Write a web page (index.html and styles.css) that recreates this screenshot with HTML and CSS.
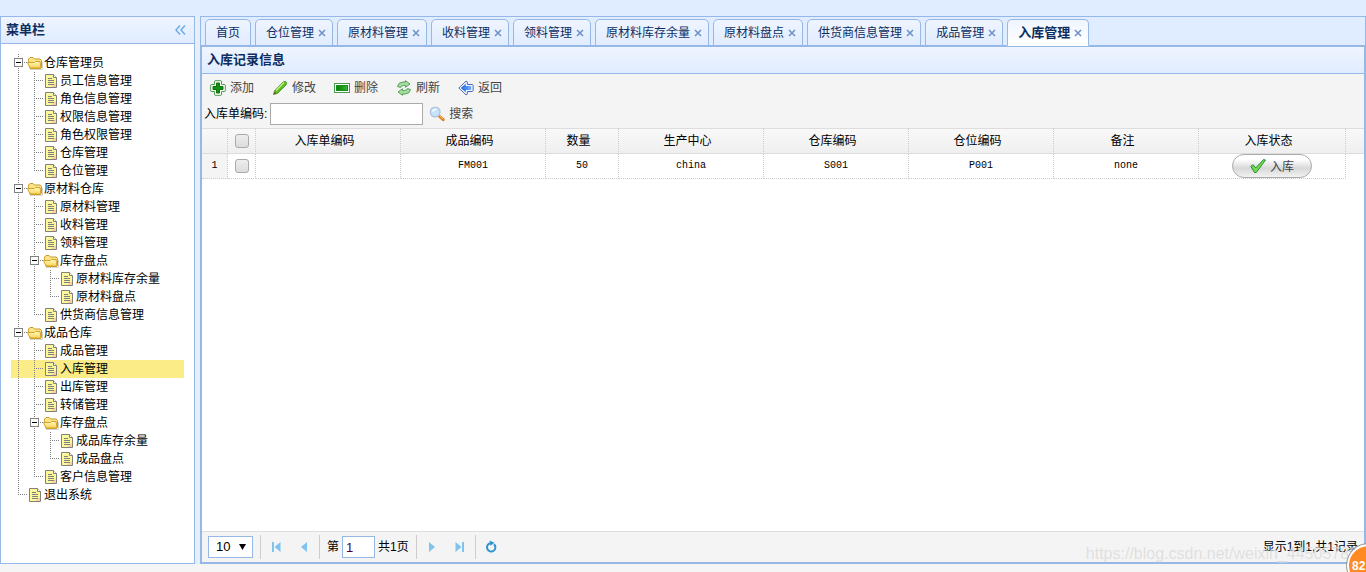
FILE: index.html
```html
<!DOCTYPE html>
<html lang="zh-CN">
<head>
<meta charset="utf-8">
<title>入库管理</title>
<link rel="stylesheet" href="styles.css">
</head>
<body>
<svg class="defs" aria-hidden="true">
  <defs>
    <linearGradient id="g-folder" x1="0" y1="0" x2="0" y2="1"><stop offset="0" stop-color="#fffbc4"/><stop offset="1" stop-color="#f7d355"/></linearGradient>
    <linearGradient id="g-minus" x1="0" y1="0" x2="1" y2="0"><stop offset="0" stop-color="#007f00"/><stop offset="1" stop-color="#35b535"/></linearGradient>
    <linearGradient id="g-arrow" x1="0" y1="0" x2="1" y2="0"><stop offset="0" stop-color="#1c62e0"/><stop offset="1" stop-color="#6fb2ff"/></linearGradient>
  </defs>
  <symbol id="folder" viewBox="0 0 16 16">
    <path d="M3 14.500h12.500V7" fill="none" stroke="#d5d5d5"/>
    <path d="M1.500 5.500V4l1.500-1.500h3L7.500 4H13l1.500 1.500v7l-1 1H3z" fill="#fbe48a" stroke="#c79a24"/>
    <path d="M.5 7.500h7l1-1h4.500l1 6.500H3z" fill="url(#g-folder)" stroke="#d6a528"/>
  </symbol>
  <symbol id="file" viewBox="0 0 16 16">
    <path d="M2.500 1.500h8l3 3v10h-11z" fill="#fdf999" stroke="#808080"/>
    <path d="M10.500 1.500v3h3" fill="#fff" stroke="#808080"/>
    <path d="M13 10v4H8z" fill="#fbd0a0"/>
    <path d="M5 5.500h4M5 7.500h6M5 9.500h6M5 11.500h6" stroke="#808080"/>
  </symbol>
  <symbol id="add" viewBox="0 0 16 16">
    <path d="M5 .7h6l.5.5V4.500h3.300l.5.5v6l-.5.5h-3.300v3.300l-.5.5H5l-.5-.5v-3.300H1.200L.7 11V5l.5-.5h3.300V1.200z" fill="#fff" stroke="#4d9a52"/>
    <path d="M6.500 3h3v3.500H13v3H9.500V13h-3V9.500H3v-3h3.500z" fill="#109310" stroke="#087308"/>
  </symbol>
  <symbol id="pencil" viewBox="0 0 16 16">
    <path d="M1.500 14.500l1.200-4L11 2l2.500-.7 1.200 1.200-.7 2.500-8.300 8.300z" fill="#5bbd22" stroke="#3f9420" stroke-width=".8"/>
    <path d="M4 10.500L12 2.500" stroke="#c4f07f" stroke-width="1.500"/>
    <path d="M1.500 14.500l1-3 2 2z" fill="#7b5930"/>
  </symbol>
  <symbol id="minus" viewBox="0 0 16 16">
    <rect x=".5" y="3.500" width="15" height="9" fill="#fff" stroke="#4d9a52"/>
    <rect x="2.500" y="5.500" width="11" height="5" fill="url(#g-minus)" stroke="#16901a"/>
  </symbol>
  <symbol id="reload" viewBox="0 0 16 16">
    <path d="M1.500 6.500q.5-4 5-4.500h3V.7L14 4 9.500 7.300V5.500h-2Q5 5.500 4.500 7.500z" fill="#a5dca0" stroke="#4a9a4d" stroke-width=".9"/>
    <path d="M14.500 9.500q-.5 4-5 4.500h-3v1.300L2 12l4.500-3.300v1.800h2q2.500 0 3-2z" fill="#a5dca0" stroke="#4a9a4d" stroke-width=".9"/>
  </symbol>
  <symbol id="back" viewBox="0 0 16 16">
    <path d="M.8 8L8 1.200l1.300.6V4.500h5l.8.7v5.600l-.8.7h-5v2.700l-1.300.6z" fill="#fff" stroke="#4467c0"/>
    <path d="M2.800 8l5-4.600v2.500h5.500v4.200H7.800v2.500z" fill="url(#g-arrow)"/>
  </symbol>
  <symbol id="search" viewBox="0 0 16 16">
    <path d="M9.500 9.500l4.700 4.200" stroke="#d98324" stroke-width="3" stroke-linecap="round"/>
    <path d="M10.500 9.800l3.700 3.300" stroke="#ffc66e"/>
    <circle cx="6.200" cy="6" r="4.900" fill="#c5e3fb" stroke="#b0c2da" stroke-width="1.200"/>
    <path d="M3.500 5.500q1-2.500 4-2" stroke="#fff" stroke-width="1.500" fill="none"/>
  </symbol>
  <symbol id="ok" viewBox="0 0 16 16">
    <path d="M.8 8.300l2.400-1.500 2.500 3.200L13.500 1.500l2 .5L6.300 14.500H4.500z" fill="#6fdc50" stroke="#2f8a3c"/>
  </symbol>
  <symbol id="close" viewBox="0 0 8 8"><path d="M1 1l6 6M7 1L1 7" stroke="#6d8fc8" stroke-width="1.500"/></symbol>
</svg>

<div class="app">
  <aside class="side">
    <header class="title side-title"><span>菜单栏</span>
      <button class="collapse" type="button" aria-label="折叠"><svg width="11" height="10" viewBox="0 0 11 10"><path d="M5 .5L1 5l4 4.500M10 .5L6 5l4 4.500" fill="none" stroke="#68aee8" stroke-width="1.500"/></svg></button>
    </header>
    <ul class="tree">
      <li class="node"><i class="hit"></i><svg class="icon"><use href="#folder"/></svg><span>仓库管理员</span></li>
      <li class="node"><i class="line"></i><i class="join"></i><svg class="icon"><use href="#file"/></svg><span>员工信息管理</span></li>
      <li class="node"><i class="line"></i><i class="join"></i><svg class="icon"><use href="#file"/></svg><span>角色信息管理</span></li>
      <li class="node"><i class="line"></i><i class="join"></i><svg class="icon"><use href="#file"/></svg><span>权限信息管理</span></li>
      <li class="node"><i class="line"></i><i class="join"></i><svg class="icon"><use href="#file"/></svg><span>角色权限管理</span></li>
      <li class="node"><i class="line"></i><i class="join"></i><svg class="icon"><use href="#file"/></svg><span>仓库管理</span></li>
      <li class="node"><i class="line"></i><i class="join last"></i><svg class="icon"><use href="#file"/></svg><span>仓位管理</span></li>
      <li class="node"><i class="hit"></i><svg class="icon"><use href="#folder"/></svg><span>原材料仓库</span></li>
      <li class="node"><i class="line"></i><i class="join"></i><svg class="icon"><use href="#file"/></svg><span>原材料管理</span></li>
      <li class="node"><i class="line"></i><i class="join"></i><svg class="icon"><use href="#file"/></svg><span>收料管理</span></li>
      <li class="node"><i class="line"></i><i class="join"></i><svg class="icon"><use href="#file"/></svg><span>领料管理</span></li>
      <li class="node"><i class="line"></i><i class="hit"></i><svg class="icon"><use href="#folder"/></svg><span>库存盘点</span></li>
      <li class="node"><i class="line"></i><i class="line"></i><i class="join"></i><svg class="icon"><use href="#file"/></svg><span>原材料库存余量</span></li>
      <li class="node"><i class="line"></i><i class="line"></i><i class="join last"></i><svg class="icon"><use href="#file"/></svg><span>原材料盘点</span></li>
      <li class="node"><i class="line"></i><i class="join last"></i><svg class="icon"><use href="#file"/></svg><span>供货商信息管理</span></li>
      <li class="node"><i class="hit"></i><svg class="icon"><use href="#folder"/></svg><span>成品仓库</span></li>
      <li class="node"><i class="line"></i><i class="join"></i><svg class="icon"><use href="#file"/></svg><span>成品管理</span></li>
      <li class="node selected"><i class="line"></i><i class="join"></i><svg class="icon"><use href="#file"/></svg><span>入库管理</span></li>
      <li class="node"><i class="line"></i><i class="join"></i><svg class="icon"><use href="#file"/></svg><span>出库管理</span></li>
      <li class="node"><i class="line"></i><i class="join"></i><svg class="icon"><use href="#file"/></svg><span>转储管理</span></li>
      <li class="node"><i class="line"></i><i class="hit"></i><svg class="icon"><use href="#folder"/></svg><span>库存盘点</span></li>
      <li class="node"><i class="line"></i><i class="line"></i><i class="join"></i><svg class="icon"><use href="#file"/></svg><span>成品库存余量</span></li>
      <li class="node"><i class="line"></i><i class="line"></i><i class="join last"></i><svg class="icon"><use href="#file"/></svg><span>成品盘点</span></li>
      <li class="node"><i class="line"></i><i class="join last"></i><svg class="icon"><use href="#file"/></svg><span>客户信息管理</span></li>
      <li class="node"><i class="join last"></i><svg class="icon"><use href="#file"/></svg><span>退出系统</span></li>
    </ul>
  </aside>

  <main class="main">
    <nav class="tabs">
      <button class="tab" type="button">首页</button>
      <button class="tab" type="button">仓位管理<svg class="x"><use href="#close"/></svg></button>
      <button class="tab" type="button">原材料管理<svg class="x"><use href="#close"/></svg></button>
      <button class="tab" type="button">收料管理<svg class="x"><use href="#close"/></svg></button>
      <button class="tab" type="button">领料管理<svg class="x"><use href="#close"/></svg></button>
      <button class="tab" type="button">原材料库存余量<svg class="x"><use href="#close"/></svg></button>
      <button class="tab" type="button">原材料盘点<svg class="x"><use href="#close"/></svg></button>
      <button class="tab" type="button">供货商信息管理<svg class="x"><use href="#close"/></svg></button>
      <button class="tab" type="button">成品管理<svg class="x"><use href="#close"/></svg></button>
      <button class="tab active" type="button">入库管理<svg class="x"><use href="#close"/></svg></button>
    </nav>
    <section class="panel">
      <header class="title">入库记录信息</header>
      <div class="tools">
        <div class="actions">
          <button class="tool" type="button"><svg class="icon"><use href="#add"/></svg>添加</button>
          <button class="tool" type="button"><svg class="icon"><use href="#pencil"/></svg>修改</button>
          <button class="tool" type="button"><svg class="icon"><use href="#minus"/></svg>删除</button>
          <button class="tool" type="button"><svg class="icon"><use href="#reload"/></svg>刷新</button>
          <button class="tool" type="button"><svg class="icon"><use href="#back"/></svg>返回</button>
        </div>
        <form class="query">
          <label for="code">入库单编码:</label>
          <input id="code" class="code" type="text">
          <button class="tool" type="button"><svg class="icon"><use href="#search"/></svg>搜索</button>
        </form>
      </div>
      <div class="grid">
        <table class="data">
          <colgroup><col class="c-num"><col class="c-check"><col class="c-std"><col class="c-std"><col class="c-qty"><col class="c-std"><col class="c-std"><col class="c-std"><col class="c-std"><col class="c-state"><col></colgroup>
          <thead>
            <tr><th></th><th class="mark"><input type="checkbox" class="check" aria-label="全选"></th><th>入库单编码</th><th>成品编码</th><th>数量</th><th>生产中心</th><th>仓库编码</th><th>仓位编码</th><th>备注</th><th>入库状态</th><th></th></tr>
          </thead>
          <tbody>
            <tr><td class="num">1</td><td><input type="checkbox" class="check" aria-label="选择第1行"></td><td></td><td>FM001</td><td>50</td><td>china</td><td>S001</td><td>P001</td><td>none</td><td><button class="pill" type="button"><svg class="icon"><use href="#ok"/></svg>入库</button></td><td class="rest"></td></tr>
          </tbody>
        </table>
      </div>
      <footer class="pager">
        <div class="size">
          <select class="pick" aria-label="每页记录数"><option>10</option></select>
          <svg class="caret" width="7" height="6" viewBox="0 0 7 6"><path d="M0 0h7L3.500 6z"/></svg>
        </div>
        <span class="sep"></span>
        <button class="page" type="button" aria-label="首页"><svg width="16" height="16" viewBox="0 0 16 16"><path d="M4 3h2v10H4zM12.500 3v10L6.500 8z"/></svg></button>
        <button class="page" type="button" aria-label="上一页"><svg width="16" height="16" viewBox="0 0 16 16"><path d="M11 3v10L5 8z"/></svg></button>
        <span class="sep"></span>
        <div class="goto"><label for="pg">第</label><input id="pg" class="pg" type="text" value="1"><span>共1页</span></div>
        <span class="sep"></span>
        <button class="page" type="button" aria-label="下一页"><svg width="16" height="16" viewBox="0 0 16 16"><path d="M5 3v10l6-5z"/></svg></button>
        <button class="page" type="button" aria-label="末页"><svg width="16" height="16" viewBox="0 0 16 16"><path d="M3.500 3v10l6-5zM10 3h2v10h-2z"/></svg></button>
        <span class="sep"></span>
        <button class="page" type="button" aria-label="刷新"><svg width="16" height="16" viewBox="0 0 16 16"><path d="M11 5.200A4.200 4.200 0 1 1 7.500 4.200" fill="none" stroke="#2f93d2" stroke-width="2"/><path class="tip" d="M6.500 1.500l5 2.200-4 3z"/></svg></button>
        <span class="info">显示1到1,共1记录</span>
      </footer>
    </section>
  </main>
</div>
<div class="watermark">https://blog.csdn.net/weixin_44505786</div>
<div class="badge">82</div>
</body>
</html>
```
FILE: styles.css
```css
* { box-sizing: border-box; }

body {
  margin: 0;
  height: 100vh;
  overflow: hidden;
  position: relative;
  display: flex;
  flex-direction: column;
  padding: 16px 0 8px;
  background: linear-gradient(#e0ecff, #e0ecff) top / 100% 16px no-repeat, #f5f5f5;
  font: 12px/18px "Liberation Sans", "Noto Sans CJK SC", sans-serif;
  color: #000;
}

button, input, select { font: inherit; color: inherit; margin: 0; }
button { padding: 0; border: 0; background: none; }

.defs { position: absolute; width: 0; height: 0; }
.icon { width: 16px; height: 16px; flex: none; }

.app {
  flex: 1;
  min-height: 0;
  display: flex;
  gap: 5px;
  background: #e6eef8;
}

.title {
  display: flex;
  align-items: center;
  height: 27px;
  padding: 0 5px;
  border-bottom: 1px solid #95b8e7;
  background: linear-gradient(#eff5ff, #e0ecff);
  color: #0e2d5f;
  font-size: 13px;
  font-weight: bold;
}

/* Menu */
.side {
  width: 195px;
  flex: none;
  border: 1px solid #95b8e7;
  background: #fff;
}
.side-title { justify-content: space-between; padding-right: 8px; }
.collapse { display: flex; }

.tree { list-style: none; margin: 0; padding: 10px; }
.node { display: flex; align-items: center; height: 18px; line-height: 20px; white-space: nowrap; }
.node span { padding-left: 1px; }
.node.selected { background: #fbec88; }
.node i {
  --v: repeating-linear-gradient(#808080 0 1px, transparent 1px 2px) 7px 0;
  --h: repeating-linear-gradient(90deg, #808080 0 1px, transparent 1px 2px) 7px 8px / 9px 1px no-repeat;
  width: 16px;
  height: 18px;
  flex: none;
}
.line { background: var(--v) / 1px 18px no-repeat; }
.join { background: var(--v) / 1px 18px no-repeat, var(--h); }
.join.last { background: var(--v) / 1px 9px no-repeat, var(--h); }
.hit {
  background:
    linear-gradient(#000, #000) 5px 8px / 5px 1px no-repeat,
    linear-gradient(#fff, #fff) 4px 5px / 7px 7px no-repeat,
    linear-gradient(#808080, #808080) 3px 4px / 9px 9px no-repeat,
    var(--v) / 1px 18px no-repeat,
    var(--h);
}

/* Tabs */
.main {
  flex: 1;
  min-width: 0;
  display: flex;
  flex-direction: column;
  border: 1px solid #95b8e7;
}
.tabs {
  display: flex;
  gap: 4px;
  height: 29px;
  flex: none;
  padding: 2px 4px 0;
  border-bottom: 1px solid #95b8e7;
  background: #e0ecff;
}
.tab {
  display: flex;
  align-items: center;
  height: 27px;
  flex: none;
  padding: 0 10px;
  border: 1px solid #95b8e7;
  border-radius: 5px 5px 0 0;
  background: linear-gradient(#eff5ff, #e0ecff);
  color: #0e2d5f;
  white-space: nowrap;
}
.tab.active {
  border-bottom-color: #fff;
  background: linear-gradient(#eff5ff, #fff);
  font-size: 13px;
  font-weight: bold;
}
.x { width: 8px; height: 8px; margin: 0 -4px 0 4px; }

/* Panel */
.panel {
  flex: 1;
  min-height: 0;
  display: flex;
  flex-direction: column;
  border: 1px solid #95b8e7;
  background: #fff;
}
.tools { padding: 1px 2px; background: #f4f4f4; }
.actions { display: flex; gap: 18px; padding: 0 6px; height: 26px; }
.tool { display: flex; align-items: center; gap: 4px; color: #444; }
.query { display: flex; align-items: center; height: 26px; }
.code { width: 153px; height: 22px; margin: 0 6px 0 3px; border: 1px solid #a9a9a9; background: #fff; }

.grid { flex: 1; min-height: 0; overflow: hidden; }
.data { width: 100%; table-layout: fixed; border-collapse: separate; border-spacing: 0; }
.c-num { width: 26px; }
.c-check { width: 28px; }
.c-std { width: 145px; }
.c-qty { width: 73px; }
.c-state { width: 147px; }
th, td { padding: 0; text-align: center; border-right: 1px dotted #ccc; }
th {
  height: 26px;
  padding-right: 7px;
  border-top: 1px solid #ddd;
  border-bottom: 1px solid #ddd;
  background: linear-gradient(#f9f9f9, #efefef);
  font-weight: normal;
}
th.mark { padding-right: 0; }
td {
  height: 25px;
  border-bottom: 1px dotted #ccc;
  font-family: "Liberation Mono", "Noto Sans CJK SC", monospace;
  font-size: 10px;
}
td.num { background: #f4f4f4; }
th:last-child, td.rest { border-right: 0; }
td.rest { border-bottom: 0; }
.check {
  appearance: none;
  display: block;
  width: 14px;
  height: 14px;
  margin: 0 auto;
  border: 1px solid #aaa;
  border-radius: 3px;
  background: linear-gradient(#eee, #dcdcdc);
}
.pill {
  display: flex;
  align-items: center;
  justify-content: center;
  gap: 4px;
  width: 80px;
  height: 24px;
  margin: 0 auto;
  border: 1px solid #aaa;
  border-radius: 12px;
  background: linear-gradient(#fff 20%, #d8d8d8 60%, #f2f2f2);
  color: #444;
  font: 12px/18px "Noto Sans CJK SC", sans-serif;
}

/* Pager */
.pager {
  display: flex;
  align-items: center;
  height: 31px;
  flex: none;
  padding: 0 6px;
  border-top: 1px solid #ddd;
  background: #f4f4f4;
}
.size { display: grid; align-items: center; margin-right: 6px; }
.pick {
  appearance: none;
  grid-area: 1 / 1;
  width: 45px;
  height: 22px;
  padding: 0 7px;
  border: 1px solid #95b8e7;
  border-radius: 0;
  background: #fff;
  font-size: 13px;
}
.caret { grid-area: 1 / 1; justify-self: end; margin-right: 7px; pointer-events: none; }
.sep { width: 1px; height: 24px; margin: 0 1px; background: #ccc; }
.page { display: flex; justify-content: center; width: 28px; fill: #7fc3ee; }
.tip { fill: #2f93d2; }
.goto { display: flex; align-items: center; gap: 3px; padding: 0 6px; }
.pg { width: 33px; height: 22px; padding: 0 3px; border: 1px solid #95b8e7; background: #fff; font-size: 13px; color: #404; }
.info { margin-left: auto; }

/* Overlays */
.watermark {
  position: absolute;
  right: 8px;
  bottom: 9px;
  font-size: 16px;
  color: #d9d9d9;
  opacity: .8;
  text-shadow: 0 0 1px #fff;
  pointer-events: none;
}
.badge {
  position: absolute;
  right: -24px;
  bottom: -15px;
  width: 43px;
  height: 43px;
  padding: 11px 0 0 3px;
  border: 2px solid #fff;
  border-radius: 50%;
  outline: 1px solid #999;
  background: #ff8a24;
  color: #fff;
  font-weight: bold;
}
```
